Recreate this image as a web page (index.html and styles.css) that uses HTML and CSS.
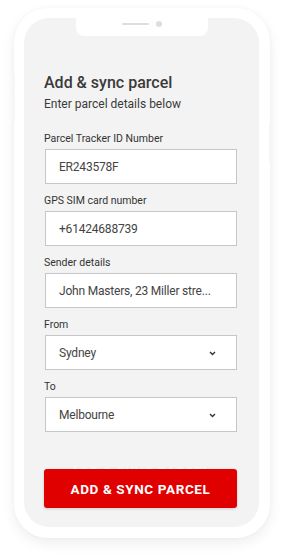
FILE: index.html
```html
<!DOCTYPE html>
<html lang="en">
<head>
<meta charset="utf-8">
<title>Add &amp; sync parcel</title>
<link rel="stylesheet" href="styles.css">
</head>
<body>
<div class="phone">
  <span class="side-btn side-btn-l1"></span>
  <span class="side-btn side-btn-l2"></span>
  <span class="side-btn side-btn-r1"></span>
  <div class="screen">
    <div class="notch"><span class="speaker"></span><span class="camera"></span></div>
    <div class="content">
      <h1 class="title">Add &amp; sync parcel</h1>
      <p class="subtitle">Enter parcel details below</p>
      <div class="fields">
        <div class="field">
          <label class="label">Parcel Tracker ID Number</label>
          <div class="input">ER243578F</div>
        </div>
        <div class="field">
          <label class="label">GPS SIM card number</label>
          <div class="input">+61424688739</div>
        </div>
        <div class="field">
          <label class="label">Sender details</label>
          <div class="input">John Masters, 23 Miller stre...</div>
        </div>
        <div class="field">
          <label class="label">From</label>
          <div class="input select"><span>Sydney</span>
            <svg class="chev" width="7" height="5" viewBox="0 0 7 5"><polyline points="1,1 3.5,3.5 6,1" fill="none" stroke="#333" stroke-width="1.4"/></svg>
          </div>
        </div>
        <div class="field">
          <label class="label">To</label>
          <div class="input select"><span>Melbourne</span>
            <svg class="chev" width="7" height="5" viewBox="0 0 7 5"><polyline points="1,1 3.5,3.5 6,1" fill="none" stroke="#333" stroke-width="1.4"/></svg>
          </div>
        </div>
      </div>
      <div class="ghost"><span>ADD &amp; SYNC PARCEL</span></div>
      <button class="btn">ADD &amp; SYNC PARCEL</button>
    </div>
  </div>
</div>
</body>
</html>
```
FILE: styles.css
```css
* { box-sizing: border-box; }
html, body { margin: 0; padding: 0; background: #fff; }
body {
  font-family: Roboto, "Noto Sans", sans-serif;
  width: 285px;
  height: 555px;
  overflow: hidden;
}
.phone {
  position: relative;
  margin: 8px 0 0 14px;
  width: 256px;
  height: 530px;
  background: #fff;
  border-radius: 34px;
  padding: 10px 11px 11px 10px;
  box-shadow: 0 5px 14px rgba(0,0,0,0.07), 0 0 4px rgba(0,0,0,0.03);
}
.side-btn {
  position: absolute;
  width: 3px;
  background: #f6f6f6;
}
.side-btn-l1 { left: -2px; top: 66px; height: 18px; border-radius: 1px 0 0 1px; }
.side-btn-l2 { left: -2px; top: 85px; height: 29px; border-radius: 1px 0 0 1px; }
.side-btn-r1 { right: -2px; top: 115px; height: 40px; border-radius: 0 1px 1px 0; }
.screen {
  position: relative;
  width: 100%;
  height: 100%;
  background: #f3f3f3;
  border-radius: 25px;
}
.notch {
  position: absolute;
  top: 0;
  left: 52px;
  width: 132px;
  height: 18px;
  background: #fff;
  border-radius: 0 0 8px 8px;
  display: flex;
  align-items: center;
  justify-content: center;
  gap: 7px;
  padding-bottom: 6px;
}
.speaker { width: 27px; height: 2.5px; background: #dedede; border-radius: 2px; }
.camera { width: 6px; height: 6px; background: #dedede; border-radius: 50%; }
.content {
  padding: 55px 22px 0 20px;
}
.title {
  margin: 0;
  font-size: 16px;
  line-height: 20px;
  font-weight: 500;
  color: #3a3a3a;
}
.subtitle {
  margin: 3px 0 0;
  font-size: 12px;
  line-height: 16px;
  color: #3a3a3a;
}
.fields {
  margin-top: 20px;
  display: flex;
  flex-direction: column;
  gap: 10px;
}
.field { display: flex; flex-direction: column; gap: 3px; }
.label {
  font-size: 10.5px;
  line-height: 14px;
  color: #333;
}
.input {
  margin-left: 1px;
  height: 35px;
  background: #fff;
  border: 1px solid #c6c6c6;
  padding: 0 20px 0 13px;
  display: flex;
  align-items: center;
  justify-content: space-between;
  font-size: 12px;
  letter-spacing: -0.2px;
  color: #444;
  white-space: nowrap;
}
.chev { display: block; margin-top: 1px; }
.ghost {
  margin-top: 31px;
  height: 6px;
  overflow: hidden;
  text-align: center;
  font-size: 13.5px;
  font-weight: 700;
  letter-spacing: 0.6px;
  line-height: 16px;
  color: #fbfbfb;
}
.btn {
  display: block;
  width: 193px;
  height: 39px;
  border: 0;
  border-radius: 3px;
  background: #e10000;
  color: #fff;
  font-family: Roboto, "Noto Sans", sans-serif;
  font-size: 13.5px;
  font-weight: 700;
  letter-spacing: 0.6px;
  box-shadow: 0 1px 3px rgba(0,0,0,0.15);
  padding: 0;
}
```
